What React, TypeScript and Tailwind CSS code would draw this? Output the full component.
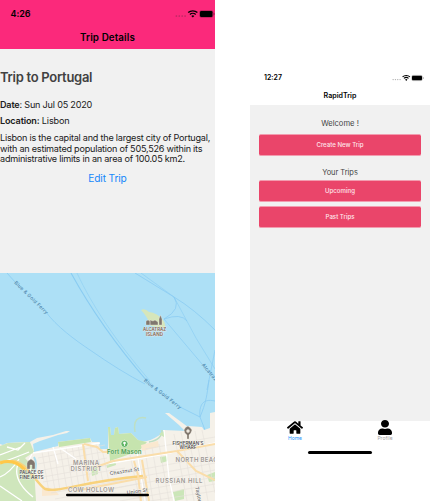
import React from "react";
import { FaHome, FaUser } from "react-icons/fa";

function StatusIcons({ className, dots }: { className: string; dots: string }) {
  return (
    <svg viewBox="0 0 40 10" className={className} aria-hidden="true">
      <g fill={dots}>
        <circle cx="1.4" cy="7" r=".85" />
        <circle cx="4.3" cy="7" r=".85" />
        <circle cx="7.2" cy="7" r=".85" />
        <circle cx="10.1" cy="7" r=".85" />
      </g>
      <g fill="none" stroke="#000" strokeWidth="1.35">
        <path d="M13.2 3.6C15.6 1.2 20 1.2 22.4 3.6" />
        <path d="M14.9 5.5C16.5 4 19.1 4 20.7 5.5" />
      </g>
      <path d="M16.3 6.9Q17.8 5.8 19.3 6.9L17.8 8.6Z" />
      <rect x="24.6" y="1.7" width="13.4" height="6.6" rx="1.7" fill="none" stroke="#000" strokeOpacity=".4" strokeWidth=".6" />
      <rect x="25" y="2.1" width="12.5" height="5.8" rx="1.2" />
      <path d="M38.7 4v2.1q1-.4 1-1.05T38.7 4Z" opacity=".5" />
    </svg>
  );
}

function TripMap() {
  return (
    <svg viewBox="0 273 215 228" className="block h-[228px] w-[215px]" fontFamily="Inter, 'Liberation Sans', sans-serif">
      <rect y="273" width="215" height="228" fill="#ade0f6" />
      <g fill="none" stroke="#8accf2" strokeWidth=".8">
        <path d="M7 273L15 282M46 312C56 326 75 340 90 350Q120 371 145 384" />
        <path d="M71 273C88 304 110 338 147 381" strokeWidth="1.1" />
        <path d="M77 273C93 307 115 340 150 381" opacity=".7" />
        <path d="M135 273L174 297Q194 309 215 330" />
        <path d="M141 273L174 297L196 338L215 369" opacity=".8" />
        <path d="M174 297Q182 309 164 319Q181 313 187 321" />
        <path d="M164 319L202 364M215 350L207 390" opacity=".9" />
        <path d="M180 407L200 417C199 406 202 398 215 401M200 417C206 403 207 395 209 380M200 417L205 430" />
      </g>
      <path d="M0 444L3 445L7 443L25 442L30 442L37 438L53 435L66 431L70 431L67 433L58 435L40 441L33 444L34 452L58 446V442L90 438L92 442L99 442L100 449L108 449V427L110 427L111 435L114 435L115 428L118 427L119 434L131 433L138 440Q146 444 158 436L163 433V430L186 431L188 426L202 427L204 430L210 428V413L215 412V501H0Z" fill="#f5f1e9" />
      <path d="M165 413L169 413L188 427L184 430L179 425Z" fill="#f5f1e9" />
      <path d="M0 446L8 443L30 442L34 452L25 458L34 468L36 501H0Z" fill="#cfe6bc" />
      <path d="M58 442L90 438L91 442L59 447ZM108 427L110 427L111 435L114 435L115 428L118 427L119 434L131 433L138 440L147 442L139 451L110 461L109 449Z" fill="#c6e4ae" />
      <path d="M135 432C133 420 138 416 146 418M162 430Q162 440 149 442" fill="none" stroke="#bedfc4" strokeWidth="1.5" />
      <path d="M91 466L97 466L98 474L92 476ZM160 457L167 456L168 461L161 463ZM173 492L184 489L184 499L175 501ZM106 463L115 460L116 465L107 468ZM159 434L164 431L164 437ZM207 475L215 472V481L209 482Z" fill="#cbe6b8" />
      <path d="M34 457Q38 464 34 473" fill="none" stroke="#aadced" strokeWidth="2" />
      <path d="M141 445L158 441L159 447L142 451ZM42 486L54 489L59 495L42 496Z" fill="#fae8cf" />
      <g fill="none" stroke="#e7e2dc" strokeWidth=".65">
        <path d="M42 452L49 492M48 451L55 490M54 449L60 491M60 448L67 490M66 447L73 489M72 446L79 487M78 445L85 486M84 444L91 485M90 443L97 484M96 444L103 483M102 449L109 482" />
        <path d="M38 458L105 445M38 464L107 451M38 471L107 458M43 477L109 465M43 482L125 468M51 493L140 477M55 499L142 483" />
        <path d="M130 455L140 501M137 452L147 501M145 450L153 501M152 447L161 501M159 444L169 501M174 434L187 501M181 432L194 501M188 434L201 501M195 431L208 501M202 430L215 493" />
        <path d="M111 475L215 456M111 482L215 463M111 489L215 470M112 496L215 477M120 501L215 484M150 501L215 491M139 458L215 444M145 449L215 437" />
      </g>
      <g fill="none" stroke="#fff" strokeWidth="1.3">
        <path d="M33 453L100 443M53 447L58 464M60 448L76 459M0 455L21 447M0 463Q17 457 29 452M0 477Q10 473 19 459M0 486L22 501M18 464Q12 480 33 497M32 454Q25 464 33 474M7 447L18 450L25 443" />
        <path d="M164 430L169 478L174 501M106 464L165 454L215 443M137 452L145 501" />
      </g>
      <g fill="none" stroke="#faddaa" strokeWidth="2">
        <path d="M0 462L14 461C29 465 36 483 45 489C60 493 78 482 143 476" stroke="#f8d27c" strokeWidth="2.4" />
        <path d="M83 444L88 481M84 444L97 447L103 452L109 452M96 467L113 461L177 451L215 444M134 461L138 475L141 501M142 460L149 501M177 451L196 471L215 480M75 491L147 477" />
      </g>
      <path d="M0 463Q14 458 25 470" fill="none" stroke="#ffc849" strokeWidth="3" />
      <path d="M141 310Q145 308 149 312Q157 313 162 319Q166 323 165 328L151 326Q147 316 141 310Z" fill="#d6e6bb" />
      <g fill="#80776e" stroke="#f7f3eb" strokeWidth=".35">
        <path d="M146 325V321L148 320L150 321V325ZM150 325V320L153 321L155 320L158 322V325ZM159 325V319L160.5 315L162 319V325Z" />
        <path d="M27 463L28 461L31 459L34 461L35 463V469H32V465H30V469H27Z" />
        <path d="M184 430Q185 427 188 426Q191 428 192 430Q191 434 189 435V439H187V435Q184 433 184 430Z" />
        <circle cx="188" cy="431" r="1.5" fill="#ede7dd" />
      </g>
      <g fill="#796458" stroke="#f7efe5" strokeWidth=".55" paintOrder="stroke" fontWeight="600" fontSize="4.6" textAnchor="middle">
        <text x="154.5" y="331" textLength="23" lengthAdjust="spacingAndGlyphs">ALCATRAZ</text>
        <text x="154.5" y="335.6" textLength="17" lengthAdjust="spacingAndGlyphs">ISLAND</text>
      </g>
      <g fill="#504c48" stroke="#fff" strokeWidth=".5" paintOrder="stroke" fontWeight="600" fontSize="4.5" textAnchor="middle">
        <text x="31.5" y="474.3" textLength="24" lengthAdjust="spacingAndGlyphs">PALACE OF</text>
        <text x="31.5" y="478.9" textLength="24" lengthAdjust="spacingAndGlyphs">FINE ARTS</text>
        <text x="188" y="444.6" textLength="31" lengthAdjust="spacingAndGlyphs">FISHERMAN’S</text>
        <text x="188" y="449.2" textLength="17" lengthAdjust="spacingAndGlyphs">WHARF</text>
      </g>
      <g fill="#9d9894" stroke="#faf8f4" strokeWidth=".6" paintOrder="stroke" fontWeight="600" fontSize="6">
        <text x="73" y="465.2" textLength="26">MARINA</text>
        <text x="70.5" y="471.4" textLength="31">DISTRICT</text>
        <text x="68" y="491.5" textLength="46">COW HOLLOW</text>
        <text x="155.5" y="483" textLength="47">RUSSIAN HILL</text>
        <text x="175.5" y="462.2" textLength="47">NORTH BEACH</text>
      </g>
      <g fill="#666461" stroke="#fff" strokeWidth=".6" paintOrder="stroke" fontWeight="500" fontSize="5.2">
        <text transform="translate(110 475.3) rotate(-9)" textLength="29.5">Chestnut St</text>
        <text transform="translate(127 494.5) rotate(-8)" textLength="21">Union St</text>
        <text transform="translate(195 487) rotate(78)" textLength="22">Taylor St</text>
      </g>
      <g fill="#4b83aa" fontSize="4.9" fontWeight="500">
        <text transform="translate(14 283) rotate(44.5)" textLength="45">Blue &amp; Gold Ferry</text>
        <text transform="translate(143.5 381) rotate(38)" textLength="46">Blue &amp; Gold Ferry</text>
        <text transform="translate(201.5 365) rotate(50)" textLength="42">Alcatraz Cruises</text>
      </g>
      <circle cx="124.5" cy="443.8" r="3.6" fill="#61b666" stroke="#eff7e6" strokeWidth=".7" />
      <path d="M124.5 446V443.5" stroke="#fff" strokeWidth=".8" />
      <circle cx="124.5" cy="443" r="1.3" fill="#fff" />
      <text x="107" y="453.8" fontSize="6.1" fontWeight="600" fill="#4d9d56" stroke="#e4f1d8" strokeWidth=".4" paintOrder="stroke" textLength="34.5">Fort Mason</text>
      <rect x="66" y="493.8" width="83" height="2.5" rx="1.25" fill="#000" />
    </svg>
  );
}

function TripButton({ children }: { children: React.ReactNode }) {
  return (
    <button className="block h-[22px] w-[162px] rounded-[2px] border-y border-[#f29caf] bg-[#ea456a] text-center text-[6.1px] leading-[20px] font-medium text-[#ffe6ec]">
      {children}
    </button>
  );
}

function TripDetails() {
  return (
    <section className="flex h-[501px] w-[215px] flex-col overflow-hidden bg-[#f1f1f1]">
      <header className="h-[49px] shrink-0 bg-[#fb297b] text-black">
        <div className="flex h-[28px] items-center justify-between pl-[10.5px]">
          <span className="text-[9px] leading-[12px] font-semibold tracking-[-0.05px]">4:26</span>
          <StatusIcons className="h-[10px] w-[40px]" dots="#b92962" />
        </div>
        <h1 className="text-center text-[9.8px] leading-[19px] font-semibold tracking-[0.1px]">Trip Details</h1>
      </header>
      <div className="h-[224px] shrink-0 whitespace-nowrap pt-[19px] text-[#202020]">
        <h2 className="text-[13px] leading-[18px] font-semibold tracking-[-0.28px] text-[#414141]">Trip to Portugal</h2>
        <p className="mt-[13px] text-[9.1px] leading-[12px] tracking-[-0.2px]"><b className="font-semibold">Date</b>: Sun Jul 05 2020</p>
        <p className="mt-[4px] text-[9.1px] leading-[12px] tracking-[-0.16px]"><b className="font-semibold">Location:</b> Lisbon</p>
        <p className="mt-[6px] text-[9.1px] leading-[10.7px] tracking-[-0.23px]">
          Lisbon is the capital and the largest city of Portugal,<br />
          with an estimated population of 505,526 within its<br />
          administrative limits in an area of 100.05 km2.
        </p>
        <button className="mt-[6px] block w-full text-center text-[10.2px] leading-[14px] tracking-[-0.15px] text-[#1688fb]">Edit Trip</button>
      </div>
      <TripMap />
    </section>
  );
}

function TripHome() {
  return (
    <section className="mt-[68px] flex h-[433px] w-[180px] flex-col bg-white">
      <header className="h-[37px] text-black">
        <div className="flex h-[20px] items-center justify-between pr-[6px] pl-[14px]">
          <span className="text-[7px] leading-[10px] font-semibold">12:27</span>
          <StatusIcons className="h-[8px] w-[32px]" dots="#aaa" />
        </div>
        <h1 className="text-center text-[7.1px] leading-[16px] font-semibold">RapidTrip</h1>
      </header>
      <main className="flex h-[316px] flex-col items-center bg-[#f1f1f1] text-[#444]">
        <p className="mt-[13px] h-[16px] text-[7.6px] leading-[12px]">Welcome !</p>
        <TripButton>Create New Trip</TripButton>
        <p className="mt-[11px] h-[13px] text-[7.4px] leading-[11px]">Your Trips</p>
        <div className="flex flex-col gap-[4px]">
          <TripButton>Upcoming</TripButton>
          <TripButton>Past Trips</TripButton>
        </div>
      </main>
      <nav className="grid h-[27px] grid-cols-2 text-[5px] leading-[6px]">
        <div className="flex flex-col items-center text-[#2593fd]">
          <FaHome className="-mt-[1px] h-[15px] w-[16px] shrink-0 text-black" />
          <span>Home</span>
        </div>
        <div className="flex flex-col items-center text-[#a3a3a3]">
          <FaUser className="-mt-[1px] h-[15px] w-[14px] shrink-0 text-black" preserveAspectRatio="none" />
          <span>Profile</span>
        </div>
      </nav>
      <div className="mx-auto mt-[3px] h-[2.5px] w-[64px] rounded-full bg-black" />
    </section>
  );
}

export default function App() {
  return (
    <div className="flex h-[501px] w-[430px] justify-between overflow-hidden bg-white font-['Inter','Liberation_Sans',sans-serif]">
      <TripDetails />
      <TripHome />
    </div>
  );
}
